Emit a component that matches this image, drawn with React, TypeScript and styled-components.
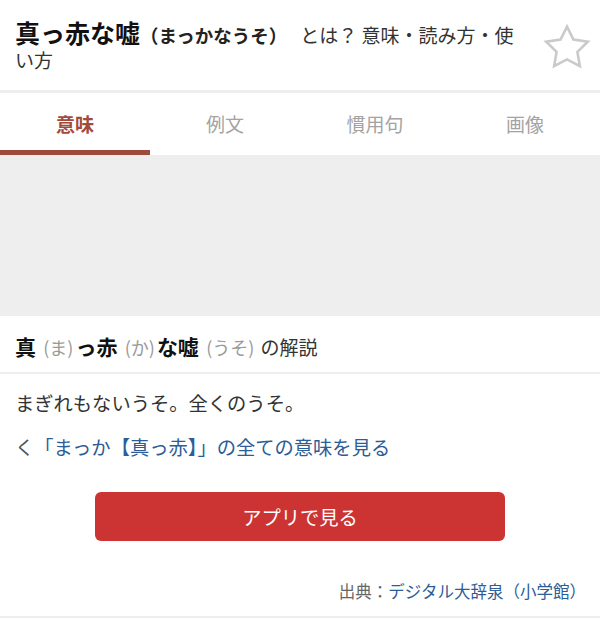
import React from "react";
import styled, { createGlobalStyle } from "styled-components";

const GlobalStyle = createGlobalStyle`
  html, body { margin: 0; padding: 0; background: #fff; }
  body { font-family: "Noto Sans CJK JP", "Noto Sans", sans-serif; color: #333; }
  * { box-sizing: border-box; }
`;

const Page = styled.div`
  width: 600px;
  background: #fff;
`;

const Header = styled.header`
  display: flex;
  align-items: center;
  gap: 12px;
  padding: 22px 8px 18px 15px;
  border-bottom: 3px solid #eeeeee;
`;

const Title = styled.h1`
  flex: 1;
  margin: 0;
  font-weight: 400;
  font-size: 19px;
  line-height: 25px;
  color: #333;
`;

const Word = styled.span`
  font-size: 25px;
  line-height: 18px;
  font-weight: 700;
  color: #111;
`;

const Reading = styled.span`
  font-size: 18.5px;
  line-height: 18px;
  font-weight: 700;
  color: #222;
  margin-right: 13px;
`;

const StarButton = styled.button`
  width: 50px;
  height: 50px;
  padding: 0;
  border: 0;
  background: none;
  display: flex;
  align-items: center;
  justify-content: center;
`;

const Tabs = styled.nav`
  display: grid;
  grid-template-columns: repeat(4, 1fr);
`;

const Tab = styled.div<{ $active?: boolean }>`
  height: 62px;
  padding-top: 5px;
  display: flex;
  align-items: center;
  justify-content: center;
  font-size: 19px;
  line-height: 24px;
  font-weight: ${(p) => (p.$active ? 700 : 400)};
  color: ${(p) => (p.$active ? "#a24b3c" : "#a3a3a3")};
  border-bottom: 5px solid ${(p) => (p.$active ? "#9d4b3d" : "transparent")};
`;

const AdArea = styled.div`
  height: 161px;
  background: #eeeeee;
`;

const SectionHeading = styled.h2`
  margin: 0;
  padding: 19px 15px 13px;
  font-size: 19px;
  line-height: 24px;
  font-weight: 400;
  color: #333;
  border-bottom: 2px solid #eeeeee;
`;

const Kanji = styled.span`
  font-size: 21px;
  line-height: 18px;
  font-weight: 700;
  color: #111;
`;

const Ruby = styled.span`
  font-size: 18px;
  line-height: 18px;
  color: #9a9a9a;
  margin: 0 2px 0 3px;
`;

const Body = styled.section`
  padding: 17px 15px 14px;
  border-bottom: 2px solid #eeeeee;
  display: flex;
  flex-direction: column;
`;

const Meaning = styled.p`
  margin: 0;
  font-size: 19.3px;
  line-height: 24px;
  color: #333;
`;

const MoreLink = styled.a`
  margin-top: 20px;
  font-size: 19.3px;
  line-height: 24px;
  color: #2d5d96;
  text-decoration: none;
`;

const Chevron = styled.span`
  color: #555;
`;

const AppButton = styled.button`
  align-self: center;
  margin-top: 33px;
  width: 410px;
  height: 49px;
  border: 0;
  border-radius: 6px;
  background: #cc3434;
  color: #fff;
  font-family: inherit;
  font-size: 19.3px;
`;

const Source = styled.p`
  margin: 39px -1px 0 0;
  text-align: right;
  font-size: 16.5px;
  line-height: 22px;
  color: #666;
`;

const SourceLink = styled.a`
  color: #2d5d96;
  text-decoration: none;
`;

const Star = () => (
  <svg width="50" height="50" viewBox="0 0 24 24" fill="none">
    <polygon
      points="12,2.2 15.09,8.46 22,9.47 17,14.34 18.18,21.22 12,17.97 5.82,21.22 7,14.34 2,9.47 8.91,8.46"
      stroke="#cacaca"
      strokeWidth="1.25"
      strokeLinejoin="miter"
    />
  </svg>
);

export default function App() {
  return (
    <Page>
      <GlobalStyle />
      <Header>
        <Title>
          <Word>真っ赤な嘘</Word>
          <Reading>（まっかなうそ）</Reading>
          とは？ 意味・読み方・使い方
        </Title>
        <StarButton aria-label="お気に入り">
          <Star />
        </StarButton>
      </Header>
      <Tabs>
        <Tab $active>意味</Tab>
        <Tab>例文</Tab>
        <Tab>慣用句</Tab>
        <Tab>画像</Tab>
      </Tabs>
      <AdArea />
      <SectionHeading>
        <Kanji>真</Kanji> <Ruby>(ま)</Ruby>
        <Kanji>っ赤</Kanji> <Ruby>(か)</Ruby>
        <Kanji>な嘘</Kanji> <Ruby>(うそ)</Ruby> の解説
      </SectionHeading>
      <Body>
        <Meaning>まぎれもないうそ。全くのうそ。</Meaning>
        <MoreLink href="#">
          <Chevron>く</Chevron>「まっか【真っ赤】」の全ての意味を見る
        </MoreLink>
        <AppButton>アプリで見る</AppButton>
        <Source>
          出典：<SourceLink href="#">デジタル大辞泉（小学館）</SourceLink>
        </Source>
      </Body>
    </Page>
  );
}
